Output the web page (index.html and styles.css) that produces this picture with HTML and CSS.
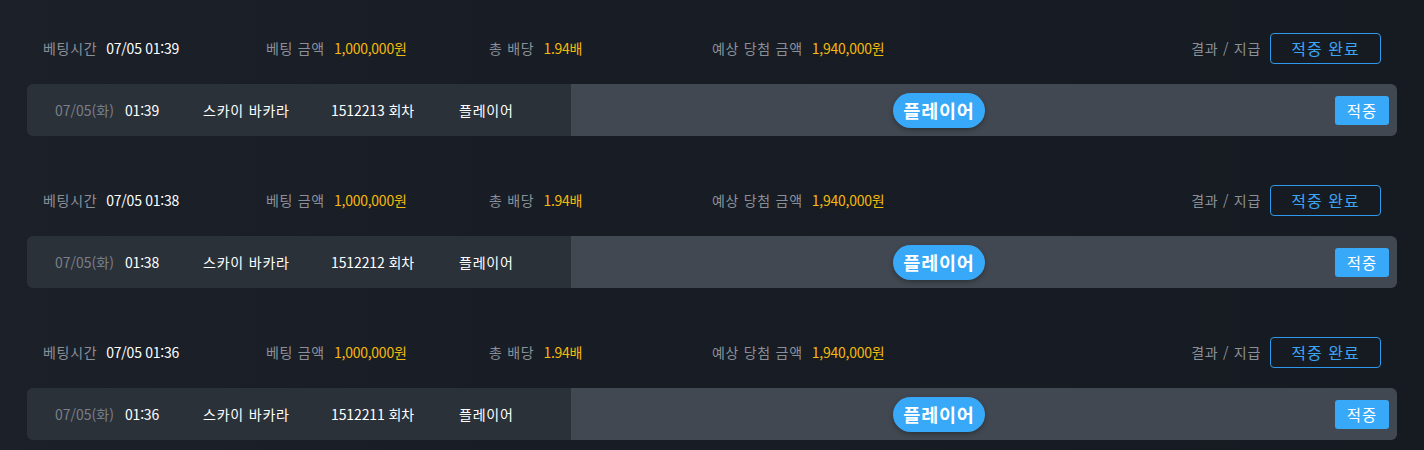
FILE: index.html
```html
<!DOCTYPE html>
<html lang="ko">
<head>
<meta charset="utf-8">
<link rel="stylesheet" href="styles.css">
</head>
<body>
<div class="list">
  <section class="bet">
    <div class="bet-head">
      <div class="field"><span class="label">베팅시간</span><span class="val">07/05 01:39</span></div>
      <div class="field"><span class="label">베팅 금액</span><span class="val gold">1,000,000원</span></div>
      <div class="field"><span class="label">총 배당</span><span class="val gold">1.94배</span></div>
      <div class="field"><span class="label">예상 당첨 금액</span><span class="val gold">1,940,000원</span></div>
      <div class="result"><span class="label">결과 / 지급</span><span class="btn-outline">적중 완료</span></div>
    </div>
    <div class="bet-card">
      <div class="card-left">
        <span class="c-date">07/05(화)</span>
        <span class="c-time">01:39</span>
        <span class="c-game">스카이 바카라</span>
        <span class="c-round">1512213 회차</span>
        <span class="c-pick">플레이어</span>
      </div>
      <div class="card-right">
        <span class="pill">플레이어</span>
        <span class="btn-hit">적중</span>
      </div>
    </div>
  </section>
  <section class="bet">
    <div class="bet-head">
      <div class="field"><span class="label">베팅시간</span><span class="val">07/05 01:38</span></div>
      <div class="field"><span class="label">베팅 금액</span><span class="val gold">1,000,000원</span></div>
      <div class="field"><span class="label">총 배당</span><span class="val gold">1.94배</span></div>
      <div class="field"><span class="label">예상 당첨 금액</span><span class="val gold">1,940,000원</span></div>
      <div class="result"><span class="label">결과 / 지급</span><span class="btn-outline">적중 완료</span></div>
    </div>
    <div class="bet-card">
      <div class="card-left">
        <span class="c-date">07/05(화)</span>
        <span class="c-time">01:38</span>
        <span class="c-game">스카이 바카라</span>
        <span class="c-round">1512212 회차</span>
        <span class="c-pick">플레이어</span>
      </div>
      <div class="card-right">
        <span class="pill">플레이어</span>
        <span class="btn-hit">적중</span>
      </div>
    </div>
  </section>
  <section class="bet">
    <div class="bet-head">
      <div class="field"><span class="label">베팅시간</span><span class="val">07/05 01:36</span></div>
      <div class="field"><span class="label">베팅 금액</span><span class="val gold">1,000,000원</span></div>
      <div class="field"><span class="label">총 배당</span><span class="val gold">1.94배</span></div>
      <div class="field"><span class="label">예상 당첨 금액</span><span class="val gold">1,940,000원</span></div>
      <div class="result"><span class="label">결과 / 지급</span><span class="btn-outline">적중 완료</span></div>
    </div>
    <div class="bet-card">
      <div class="card-left">
        <span class="c-date">07/05(화)</span>
        <span class="c-time">01:36</span>
        <span class="c-game">스카이 바카라</span>
        <span class="c-round">1512211 회차</span>
        <span class="c-pick">플레이어</span>
      </div>
      <div class="card-right">
        <span class="pill">플레이어</span>
        <span class="btn-hit">적중</span>
      </div>
    </div>
  </section>
</div>
</body>
</html>
```

FILE: styles.css
```css
* { box-sizing: border-box; }
html, body { margin: 0; height: 100%; }
body {
  background: linear-gradient(90deg, #1b2029 0%, #181d25 40%, #161b22 100%);
  font-family: "Noto Sans CJK KR", "Noto Sans", sans-serif;
  font-size: 14px;
  color: #fff;
  overflow: hidden;
}
.list {
  padding: 30px 27px 0;
  display: flex;
  flex-direction: column;
  gap: 46px;
}
.bet { display: flex; flex-direction: column; gap: 18px; }
.bet-head {
  height: 36px;
  display: flex;
  align-items: center;
  padding: 0 16px;
}
.field {
  width: 223px;
  display: flex;
  align-items: center;
  gap: 9px;
  white-space: nowrap;
}
.label { color: #8b9098; letter-spacing: 0.7px; }
.val { color: #fff; letter-spacing: -0.25px; }
.val.gold { color: #f3b90d; }
.result {
  margin-left: auto;
  display: flex;
  align-items: center;
  gap: 9px;
}
.btn-outline {
  width: 111px;
  height: 31px;
  border: 1px solid #2f98ea;
  border-radius: 4px;
  color: #3aa6f5;
  font-size: 16px;
  letter-spacing: 1px;
  display: flex;
  align-items: center;
  justify-content: center;
}
.bet-card {
  height: 52px;
  display: flex;
  border-radius: 6px;
  overflow: hidden;
}
.card-left {
  width: 544px;
  background: #2b3139;
  display: flex;
  align-items: center;
  padding-left: 28px;
  white-space: nowrap;
}
.c-date { width: 70px; color: #7a7f87; }
.c-time { width: 78px; letter-spacing: -0.2px; }
.c-game { width: 128px; letter-spacing: 0.8px; }
.c-round { width: 128px; letter-spacing: -0.1px; }
.c-pick { letter-spacing: 0.8px; }
.card-right {
  flex: 1;
  background: #424851;
  display: flex;
  align-items: center;
  padding: 0 8px 0 322px;
}
.pill {
  width: 92px;
  height: 35px;
  border-radius: 18px;
  background: #38a9f8;
  color: #fff;
  font-weight: 700;
  font-size: 18.5px;
  letter-spacing: 0.8px;
  display: flex;
  align-items: center;
  justify-content: center;
  box-shadow: 0 2px 5px rgba(0,0,0,0.3);
}
.btn-hit {
  margin-left: auto;
  width: 54px;
  height: 29px;
  border-radius: 3px;
  background: #38a9f8;
  color: #fff;
  font-size: 15.5px;
  letter-spacing: 1px;
  display: flex;
  align-items: center;
  justify-content: center;
}
```
